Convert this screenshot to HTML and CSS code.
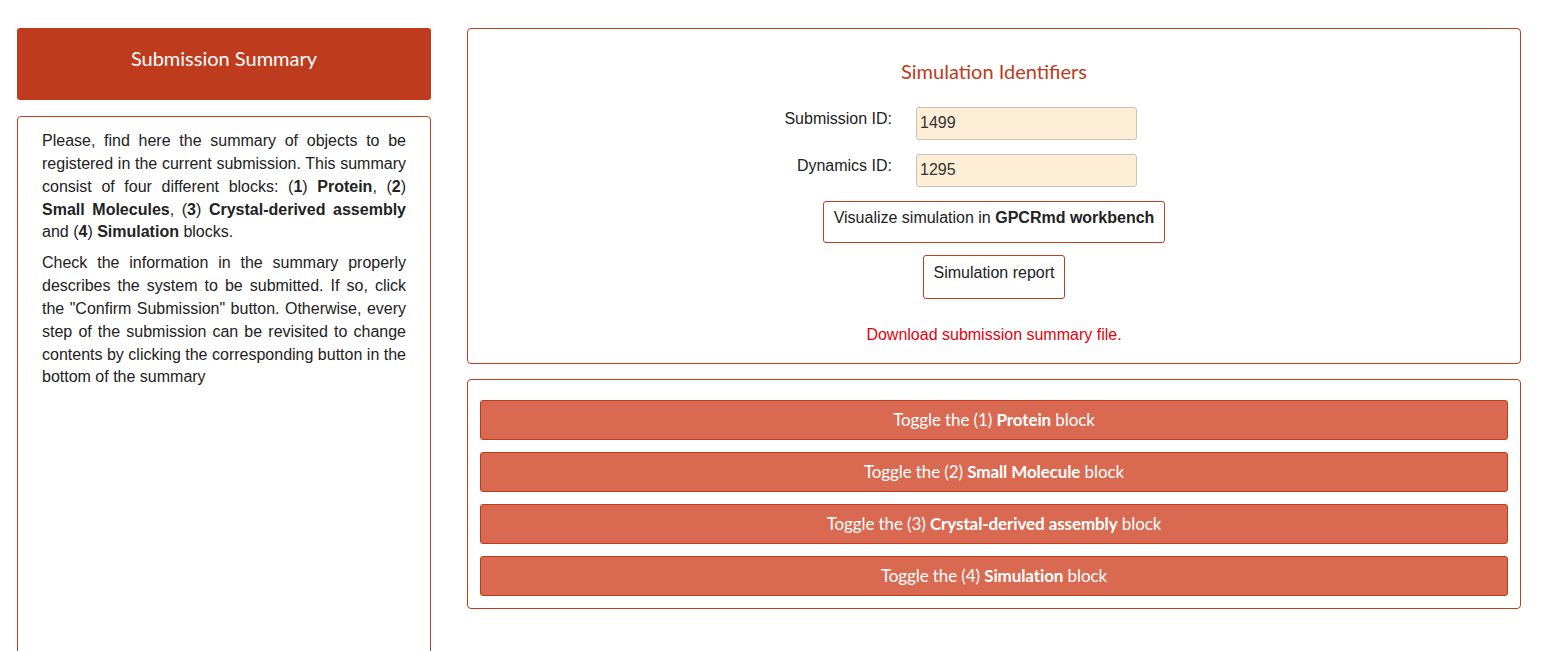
FILE: index.html
```html
<!DOCTYPE html>
<html>
<head>
<meta charset="utf-8">
<link rel="stylesheet" href="styles.css">
</head>
<body>
<div class="page">
  <aside class="side">
    <div class="side-head">Submission Summary</div>
    <div class="side-body">
      <p>Please, find here the summary of objects to be registered in the current submission. This summary consist of four different blocks: (<b>1</b>) <b>Protein</b>, (<b>2</b>) <b>Small Molecules</b>, (<b>3</b>) <b>Crystal-derived assembly</b> and (<b>4</b>) <b>Simulation</b> blocks.</p>
      <p>Check the information in the summary properly describes the system to be submitted. If so, click the "Confirm Submission" button. Otherwise, every step of the submission can be revisited to change contents by clicking the corresponding button in the bottom of the summary</p>
    </div>
  </aside>
  <main class="main">
    <section class="panel ids">
      <h3 class="ids-title">Simulation Identifiers</h3>
      <div class="form">
        <label class="lbl">Submission ID:</label>
        <input class="inp" type="text" value="1499" readonly>
        <label class="lbl">Dynamics ID:</label>
        <input class="inp" type="text" value="1295" readonly>
      </div>
      <div class="btns">
        <a class="obtn wide">Visualize simulation in <b>GPCRmd workbench</b></a>
        <a class="obtn rep">Simulation report</a>
      </div>
      <a class="dl">Download submission summary file.</a>
    </section>
    <section class="panel toggles">
      <button class="tbtn">Toggle the (1) <b>Protein</b> block</button>
      <button class="tbtn">Toggle the (2) <b>Small Molecule</b> block</button>
      <button class="tbtn">Toggle the (3) <b>Crystal-derived assembly</b> block</button>
      <button class="tbtn">Toggle the (4) <b>Simulation</b> block</button>
    </section>
  </main>
</div>
</body>
</html>
```

FILE: styles.css
```css
* { box-sizing: border-box; }
html, body { margin: 0; padding: 0; background: #fff; }
body {
  font-family: "Liberation Sans", Arial, sans-serif;
  font-size: 16px;
  line-height: 1.428571;
  color: #222;
  overflow: hidden;
}
.page {
  display: flex;
  gap: 36px;
  padding: 28px 25px 0 17px;
}
.side {
  width: 414px;
  flex: none;
  display: flex;
  flex-direction: column;
  gap: 16px;
}
.side-head {
  background: #bf3b1e;
  color: #fff;
  font-family: Lato, sans-serif;
  font-size: 20px;
  height: 72px;
  display: flex;
  align-items: center;
  justify-content: center;
  border-radius: 3px;
  padding-bottom: 12px;
}
.side-body {
  border: 1px solid #c23c1e;
  border-radius: 4px;
  padding: 13px 24px 0 24px;
  min-height: 600px;
}
.side-body p {
  margin: 0 0 8px;
  text-align: justify;
}
.main {
  flex: 1;
  display: flex;
  flex-direction: column;
  gap: 15px;
}
.panel {
  border: 1px solid #c23c1e;
  border-radius: 4px;
}
.ids {
  padding: 28px 0 16px;
  display: flex;
  flex-direction: column;
  align-items: center;
}
.ids-title {
  margin: 0 0 22px;
  font-family: Lato, sans-serif;
  font-weight: 400;
  font-size: 20px;
  line-height: 28px;
  color: #c0391b;
}
.form {
  align-self: stretch;
  display: grid;
  grid-template-columns: 424px 221px;
  column-gap: 24px;
  row-gap: 14px;
}
.lbl {
  text-align: right;
  padding-top: 1px;
  color: #222;
}
.inp {
  width: 221px;
  height: 33px;
  background: #feeed6;
  border: 1px solid #c9c2b6;
  border-radius: 3px;
  font-family: "Liberation Sans", Arial, sans-serif;
  font-size: 16px;
  color: #333;
  padding: 4px 3px 6px;
  outline: none;
}
.btns {
  margin-top: 14px;
  display: flex;
  flex-direction: column;
  align-items: center;
  gap: 12px;
}
.obtn {
  border: 1px solid #c23c1e;
  border-radius: 3px;
  padding: 5px 10px 12px;
  color: #222;
}
.obtn.rep {
  padding: 6px 10px 13px;
}
.dl {
  margin-top: 25px;
  color: #e8000b;
}
.toggles {
  padding: 20px 12px 12px;
  display: flex;
  flex-direction: column;
  gap: 12px;
}
.tbtn {
  height: 40px;
  background: #d96a51;
  border: 1px solid #c0391b;
  border-radius: 3px;
  color: #fff;
  font-family: Lato, sans-serif;
  font-size: 17px;
  letter-spacing: -0.1px;
  padding: 0;
  cursor: pointer;
}
.tbtn b { font-weight: 700; }
```
